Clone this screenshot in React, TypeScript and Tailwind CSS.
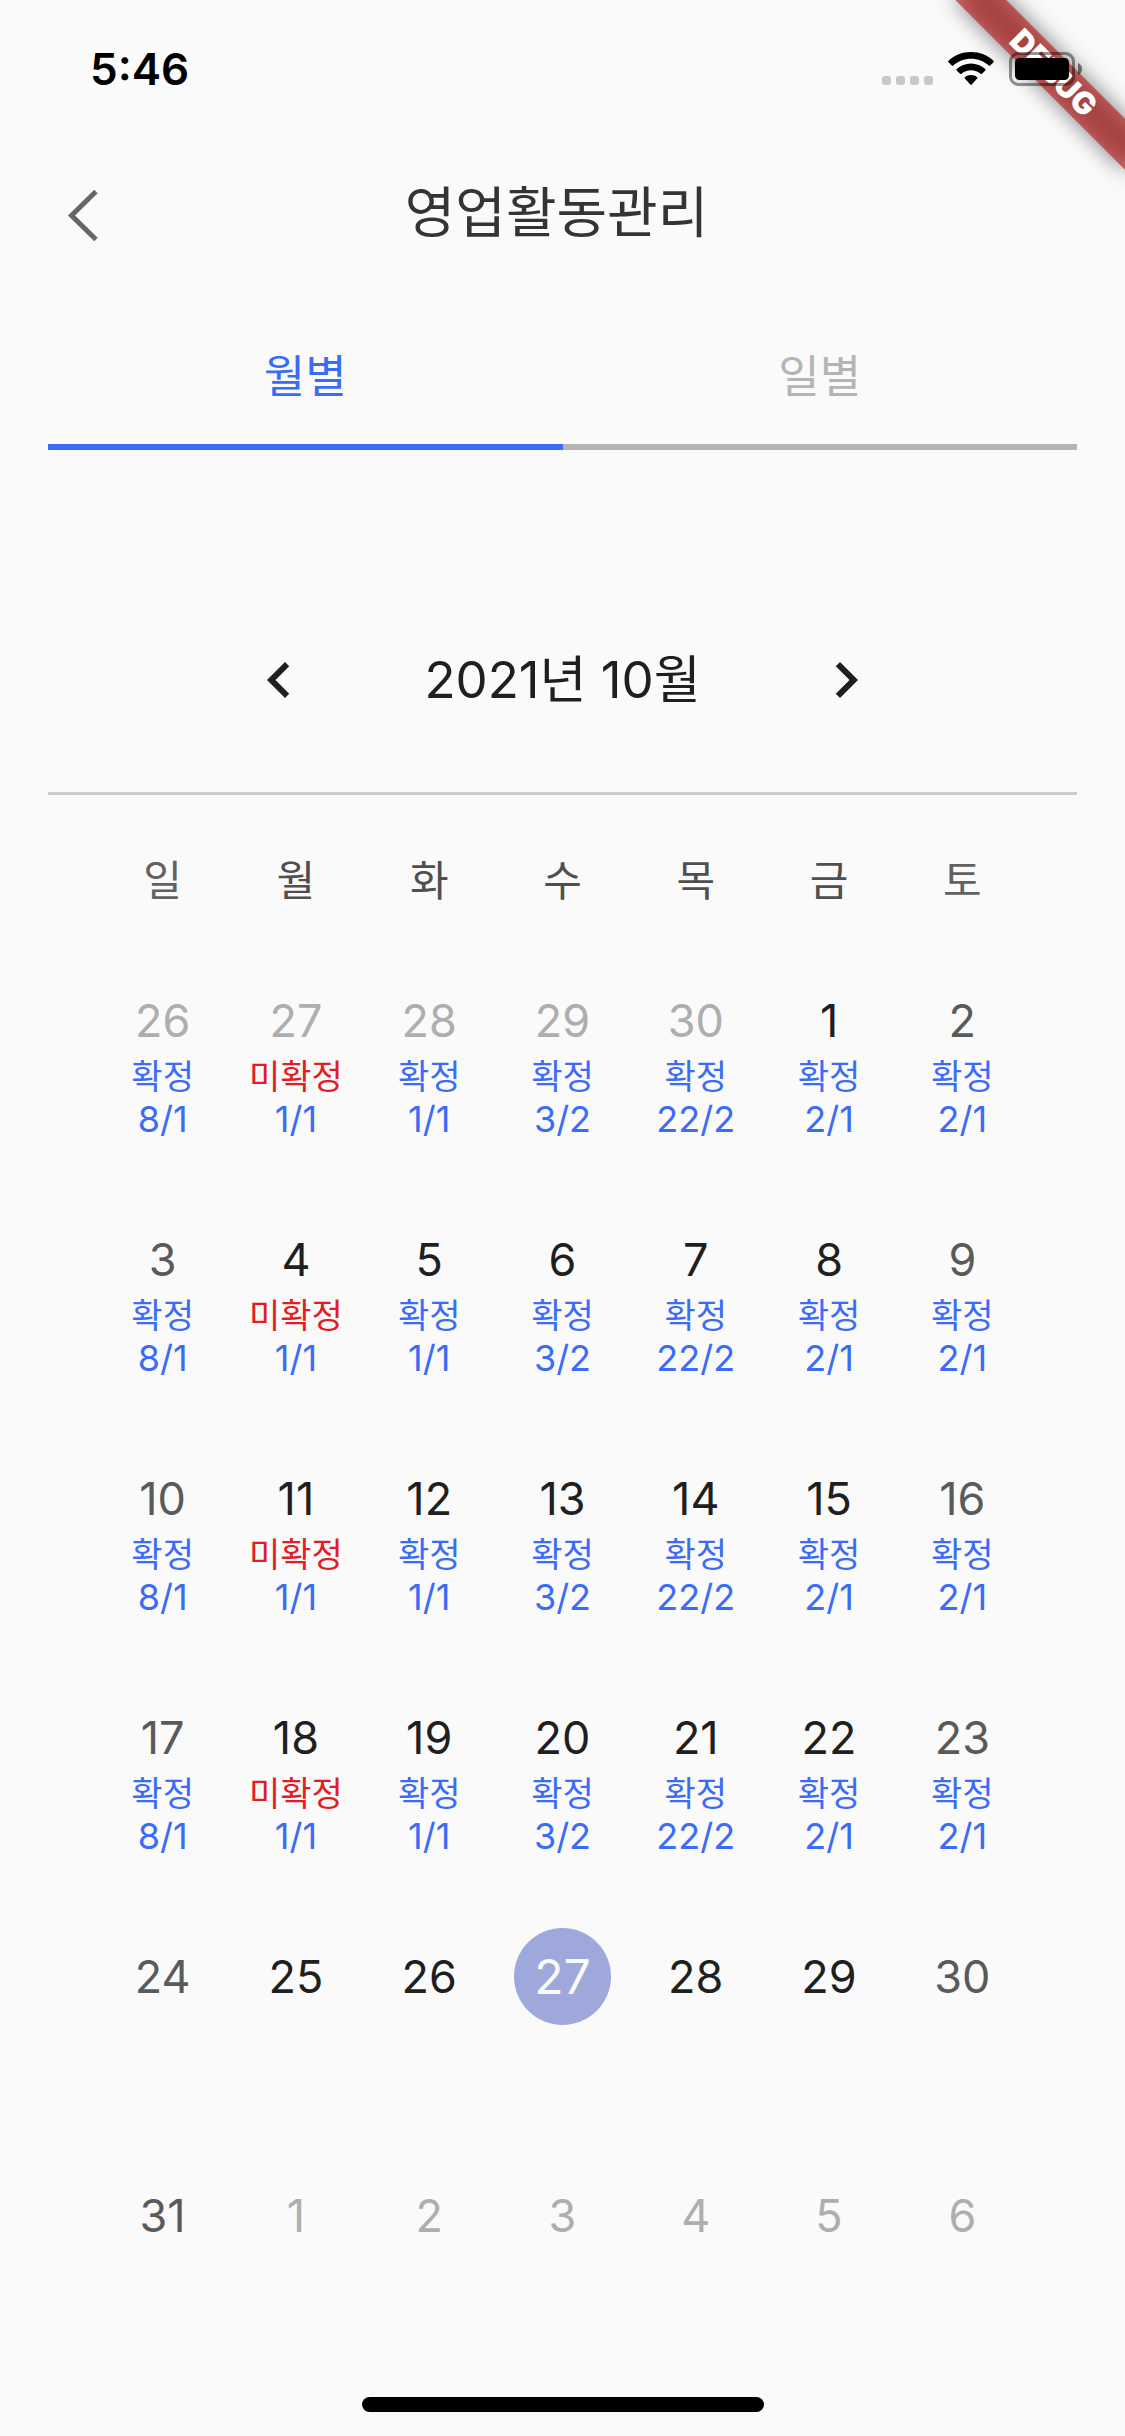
import clsx from "clsx";

type Status = "확정" | "미확정";

interface Mark {
  status: Status;
  count: string;
}

const weekdays = ["일", "월", "화", "수", "목", "금", "토"];

const weeks = [
  [26, 27, 28, 29, 30, 1, 2],
  [3, 4, 5, 6, 7, 8, 9],
  [10, 11, 12, 13, 14, 15, 16],
  [17, 18, 19, 20, 21, 22, 23],
  [24, 25, 26, 27, 28, 29, 30],
  [31, 1, 2, 3, 4, 5, 6],
];

const marks: Mark[] = [
  { status: "확정", count: "8/1" },
  { status: "미확정", count: "1/1" },
  { status: "확정", count: "1/1" },
  { status: "확정", count: "3/2" },
  { status: "확정", count: "22/2" },
  { status: "확정", count: "2/1" },
  { status: "확정", count: "2/1" },
];

const MARKED_WEEKS = 4;
const TODAY = 27;

function DebugBanner() {
  return (
    <svg
      className="pointer-events-none absolute top-0 right-0"
      width="240"
      height="240"
      viewBox="0 0 240 240"
      aria-hidden="true"
    >
      <defs>
        <filter id="banner-shadow" x="-50%" y="-200%" width="200%" height="500%">
          <feGaussianBlur stdDeviation="11" />
        </filter>
      </defs>
      <g transform="translate(240 0) rotate(45)">
        <rect x="-120" y="84" width="240" height="36" fill="#000" fillOpacity="0.5" filter="url(#banner-shadow)" />
        <rect x="-120" y="84" width="240" height="36" fill="#b71c1c" fillOpacity="0.63" />
        <text
          x="1"
          y="113"
          textAnchor="middle"
          fill="#fff"
          fontFamily="Inter, sans-serif"
          fontSize="31"
          fontWeight="900"
        >
          DEBUG
        </text>
      </g>
    </svg>
  );
}

function StatusBar() {
  return (
    <div className="relative flex h-[138px] items-center justify-between pr-[43px] pl-[90px]">
      <span className="text-[44px] leading-none font-semibold text-black">5:46</span>
      <DebugBanner />
      <div className="relative flex items-end">
        <div className="mr-[15px] mb-px flex gap-[5px]">
          <span className="size-[9px] rounded-[3px] bg-[#c8c8c8]" />
          <span className="size-[9px] rounded-[3px] bg-[#c8c8c8]" />
          <span className="size-[9px] rounded-[3px] bg-[#c8c8c8]" />
          <span className="size-[9px] rounded-[3px] bg-[#c8c8c8]" />
        </div>
        <svg className="mr-[15px]" width="46" height="34" viewBox="0 0 46 34" aria-hidden="true">
          <path d="M23 0C31.7 0 39.6 3.3 45.5 8.8c.4.4.4 1 0 1.4l-3.3 3.4c-.4.4-1 .4-1.4 0C36 9.2 29.8 6.8 23 6.8S10 9.2 5.2 13.6c-.4.4-1 .4-1.4 0L.5 10.2c-.4-.4-.4-1 0-1.4C6.4 3.3 14.3 0 23 0Z" />
          <path d="M23 11.5c5.5 0 10.5 2.1 14.3 5.5.4.4.4 1 0 1.4L34 21.8c-.4.4-1 .4-1.4 0-2.6-2.2-5.9-3.5-9.6-3.5s-7 1.3-9.6 3.5c-.4.4-1 .4-1.4 0l-3.3-3.4c-.4-.4-.4-1 0-1.4 3.8-3.4 8.8-5.5 14.3-5.5Z" />
          <path d="M23 23c2.4 0 4.5.8 6.2 2.2.4.4.4 1 0 1.4l-5.5 6c-.4.4-1 .4-1.4 0l-5.5-6c-.4-.4-.4-1 0-1.4C18.5 23.8 20.6 23 23 23Z" />
        </svg>
        <svg width="73" height="34" viewBox="0 0 73 34" aria-hidden="true">
          <rect x="1.5" y="1.5" width="63" height="31" rx="8" fill="none" stroke="#000" strokeOpacity="0.42" strokeWidth="3" />
          <rect x="6" y="6" width="54" height="22" rx="4.5" />
          <path d="M69 11c2.5 1 4 3.3 4 6s-1.5 5-4 6Z" fillOpacity="0.5" />
        </svg>
      </div>
    </div>
  );
}

function Header() {
  return (
    <header className="relative flex h-[148px] items-center justify-center pr-3">
      <button type="button" aria-label="뒤로" className="absolute top-[50px] left-[67px]">
        <svg width="32" height="54" viewBox="0 0 32 54" fill="none" stroke="#666" strokeWidth="5">
          <path d="M29 3.5 4.5 27.5 29 51.5" />
        </svg>
      </button>
      <h1 className="text-[55px] leading-none text-[#333436]">영업활동관리</h1>
    </header>
  );
}

function Tabs() {
  return (
    <nav className="mx-12 mt-6 flex text-[45px] leading-[134px]">
      <button type="button" className="flex-1 border-b-[6px] border-[#3b6cf8] text-[#3b6cf8]">
        월별
      </button>
      <button type="button" className="flex-1 border-b-[6px] border-[#b4b4b6] text-[#b4b4b6]">
        일별
      </button>
    </nav>
  );
}

function MonthNav() {
  return (
    <div className="mx-12 mt-[192px] flex justify-center border-b-[3px] border-[#cbcbcb] pb-[74px]">
      <div className="flex w-[640px] items-center justify-between text-[#1f1f1f]">
        <button type="button" aria-label="이전 달">
          <svg width="72" height="72" viewBox="0 0 24 24" fill="currentColor">
            <path d="M15.41 7.41 14 6l-6 6 6 6 1.41-1.41L10.83 12z" />
          </svg>
        </button>
        <h2 className="text-[51px] leading-[76px]">2021년 10월</h2>
        <button type="button" aria-label="다음 달">
          <svg width="72" height="72" viewBox="0 0 24 24" fill="currentColor">
            <path d="M10 6 8.59 7.41 13.17 12l-4.58 4.59L10 18l6-6z" />
          </svg>
        </button>
      </div>
    </div>
  );
}

function DayCell({ day, week, weekday }: { day: number; week: number; weekday: number }) {
  const outside = (week === 0 && day > 7) || (week === 5 && day < 7);
  const weekend = weekday === 0 || weekday === 6;
  const today = week === 4 && day === TODAY;
  const mark = week < MARKED_WEEKS ? marks[weekday] : null;

  return (
    <td className="p-0 text-center align-top">
      <button
        type="button"
        className={clsx(
          "size-[97px] rounded-full leading-none",
          today ? "bg-[#9fa8da] text-[48px] text-[#fafafa]" : "text-[45px]",
          !today && outside && "text-[#aeaeae]",
          !today && !outside && weekend && "text-[#5a5a5a]",
          !today && !outside && !weekend && "text-[#1f1f1f]"
        )}
      >
        {day}
      </button>
      {mark && (
        <div className="-mt-3.5 leading-[43px] text-[#3b6cf8]">
          <p className={clsx("text-[34px]", mark.status === "미확정" && "text-[#e51c23]")}>
            {mark.status}
          </p>
          <p className="text-[36px]">{mark.count}</p>
        </div>
      )}
    </td>
  );
}

function Calendar() {
  return (
    <div className="px-24 pt-[37px]">
      <table className="w-full table-fixed border-collapse">
        <thead>
          <tr>
            {weekdays.map((name, i) => (
              <th
                key={name}
                className={clsx(
                  "h-[140px] p-0 pb-[42px] text-[42px] leading-none font-normal",
                  i === 0 || i === 6 ? "text-[#616161]" : "text-[#4f4f4f]"
                )}
              >
                {name}
              </th>
            ))}
          </tr>
        </thead>
        <tbody>
          {weeks.map((days, week) => (
            <tr key={week} className="h-[239px] last:h-auto">
              {days.map((day, weekday) => (
                <DayCell key={weekday} day={day} week={week} weekday={weekday} />
              ))}
            </tr>
          ))}
        </tbody>
      </table>
    </div>
  );
}

export default function App() {
  return (
    <main className="flex min-h-screen flex-col overflow-hidden bg-[#fafafa] font-[Inter,'Noto_Sans_CJK_KR',sans-serif]">
      <StatusBar />
      <Header />
      <Tabs />
      <MonthNav />
      <Calendar />
      <div className="mx-auto mt-auto mb-6 h-[15px] w-[402px] rounded-full bg-black" />
    </main>
  );
}
